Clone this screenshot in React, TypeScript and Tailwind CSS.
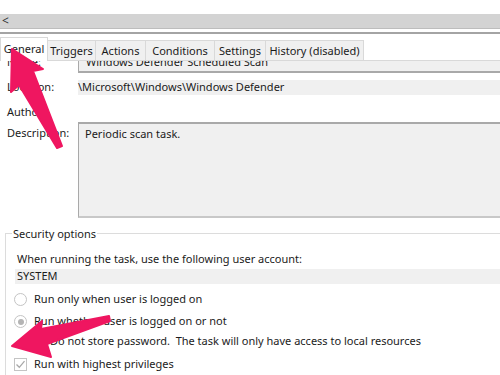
import * as React from 'react';

const tabs: { label: string; w: string; active?: boolean }[] = [
  { label: 'General', w: 'w-[48px]', active: true },
  { label: 'Triggers', w: 'w-[49px]' },
  { label: 'Actions', w: 'w-[51px]' },
  { label: 'Conditions', w: 'w-[70px]' },
  { label: 'Settings', w: 'w-[52px]' },
  { label: 'History (disabled)', w: 'w-[99px]' },
];

function Radio({ checked }: { checked?: boolean }) {
  return (
    <span className="flex h-[13px] w-[13px] shrink-0 items-center justify-center rounded-full border border-[#c4c4c4] bg-white">
      {checked && <span className="h-[6px] w-[6px] rounded-full bg-[#b4b4b4]" />}
    </span>
  );
}

function Check({ checked }: { checked?: boolean }) {
  return (
    <span className="flex h-[13px] w-[13px] shrink-0 items-center justify-center border border-[#c4c4c4] bg-white">
      {checked && (
        <svg width="11" height="11" viewBox="0 0 11 11">
          <path d="M1.5 5.5 L4.3 8.3 L9.5 2.2" fill="none" stroke="#a8a8a8" strokeWidth="1.3" />
        </svg>
      )}
    </span>
  );
}

export default function App() {
  return (
    <div className="relative h-[375px] w-[500px] overflow-hidden bg-white text-[11px] text-[#1b1b1b] [font-family:'Noto_Sans',sans-serif]">
      {/* window chrome above the tabs */}
      <div className="h-[14px]" />
      <div className="flex h-[15px] items-center border-b border-[#bdbdbd] bg-[#d3d3d3] pl-[2px] text-[12px] leading-none text-[#333]">
        &lt;
      </div>
      <div className="h-[3px]" />
      <div className="h-[2px] bg-[#a4a4a4]" />
      <div className="h-[3px]" />

      {/* tab strip */}
      <div className="flex h-[24px] items-end border-b border-[#d9d9d9]">
        {tabs.map((t) =>
          t.active ? (
            <div
              key={t.label}
              className={`${t.w} relative -mb-px flex h-[24px] items-center justify-center border border-b-0 border-[#d9d9d9] bg-white pb-[2px] leading-none`}
            >
              {t.label}
            </div>
          ) : (
            <div
              key={t.label}
              className={`${t.w} -ml-px flex h-[20px] items-center justify-center border border-b-0 border-[#d9d9d9] bg-[#f0f0f0] leading-none`}
            >
              {t.label}
            </div>
          ),
        )}
      </div>

      {/* scrolled general page */}
      <div className="h-[314px] overflow-hidden">
        <div className="-mt-[10px] flex flex-col">
          <div className="flex h-[22px]">
            <div className="w-[78px] pl-[7px] pt-[3px]">Name:</div>
            <div className="flex-1 border-b-2 border-l border-[#a9a9a9] bg-[#f0f0f0] pl-[7px] pt-[3px]">
              Windows Defender Scheduled Scan
            </div>
          </div>
          <div className="mt-[7px] flex h-[15px] items-center">
            <div className="w-[78px] pl-[7px]">Location:</div>
            <div className="flex h-full flex-1 items-center bg-[#f0f0f0]">\Microsoft\Windows\Windows Defender</div>
          </div>
          <div className="mt-[9px] flex h-[16px] items-center">
            <div className="w-[78px] pl-[7px]">Author:</div>
          </div>
          <div className="mt-[2px] flex h-[96px]">
            <div className="w-[78px] pl-[7px] pt-[3px]">Description:</div>
            <div className="flex-1 border-b-2 border-l border-t-2 border-[#a9a9a9] border-b-[#c8c8c8] bg-[#f0f0f0] pl-[6px] pt-[2px]">
              Periodic scan task.
            </div>
          </div>

          {/* security options group */}
          <div className="relative ml-[5px] mt-[15px] h-[200px] border border-r-0 border-[#dcdcdc]">
            <div className="absolute -top-[8px] left-[6px] bg-white px-px leading-[15px]">Security options</div>
            <div className="flex flex-col pl-[8px] pt-[17px]">
              <div className="pl-[3px] leading-[15px]">When running the task, use the following user account:</div>
              <div className="ml-px mt-[3px] flex h-[15px] items-center bg-[#f0f0f0] pl-[2px]">SYSTEM</div>
              <div className="mt-[8px] flex h-[15px] items-center gap-[7px]">
                <Radio />
                <span>Run only when user is logged on</span>
              </div>
              <div className="mt-[7px] flex h-[15px] items-center gap-[7px]">
                <Radio checked />
                <span>Run whether user is logged on or not</span>
              </div>
              <div className="mt-[5px] flex h-[15px] items-center gap-[4px] pl-[19px]">
                <Check />
                <span>Do not store password.&nbsp; The task will only have access to local resources</span>
              </div>
              <div className="mt-[8px] flex h-[15px] items-center gap-[7px]">
                <Check checked />
                <span>Run with highest privileges</span>
              </div>
            </div>
          </div>
        </div>
      </div>

      {/* annotation arrows */}
      <svg className="pointer-events-none absolute left-0 top-0" width="500" height="375" viewBox="0 0 500 375">
        <path
          d="M12 49 L43 69 L33 71 L62 146 L57 148 L19 85 L11 92 Z"
          fill="#ef1660"
          stroke="#ef1660"
          strokeWidth="2"
          strokeLinejoin="round"
        />
        <path
          d="M12 346 L42 321 L41 329 L109 316 L110 321 L47 344 L51 357 Z"
          fill="#ef1660"
          stroke="#ef1660"
          strokeWidth="2"
          strokeLinejoin="round"
        />
      </svg>
    </div>
  );
}
